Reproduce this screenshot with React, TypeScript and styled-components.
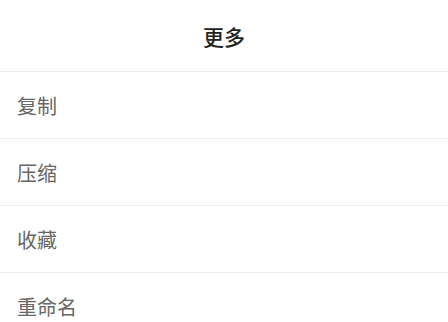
import React from "react";
import styled, { createGlobalStyle } from "styled-components";

const GlobalStyle = createGlobalStyle`
  html, body {
    margin: 0;
    padding: 0;
    background: #fff;
  }
  body {
    font-family: "Noto Sans CJK SC", "Noto Sans", sans-serif;
  }
`;

const Sheet = styled.div`
  width: 448px;
  height: 322px;
  overflow: hidden;
  background: #fff;
`;

const Header = styled.div`
  height: 71px;
  display: flex;
  align-items: center;
  justify-content: center;
  border-bottom: 1px solid #ececec;
  box-shadow: 0 -5px 4px -4px rgba(0, 0, 0, 0.03) inset;
  font-size: 21px;
  font-weight: 500;
  color: #222;
`;

const List = styled.ul`
  list-style: none;
  margin: 0;
  padding: 0;
`;

const Item = styled.li`
  height: 66px;
  display: flex;
  align-items: center;
  padding-left: 17px;
  border-bottom: 1px solid #ececec;
  font-size: 20px;
  color: #666;
`;

const actions = ["复制", "压缩", "收藏", "重命名"];

export default function App() {
  return (
    <Sheet>
      <GlobalStyle />
      <Header>更多</Header>
      <List>
        {actions.map((a) => (
          <Item key={a}>{a}</Item>
        ))}
      </List>
    </Sheet>
  );
}
